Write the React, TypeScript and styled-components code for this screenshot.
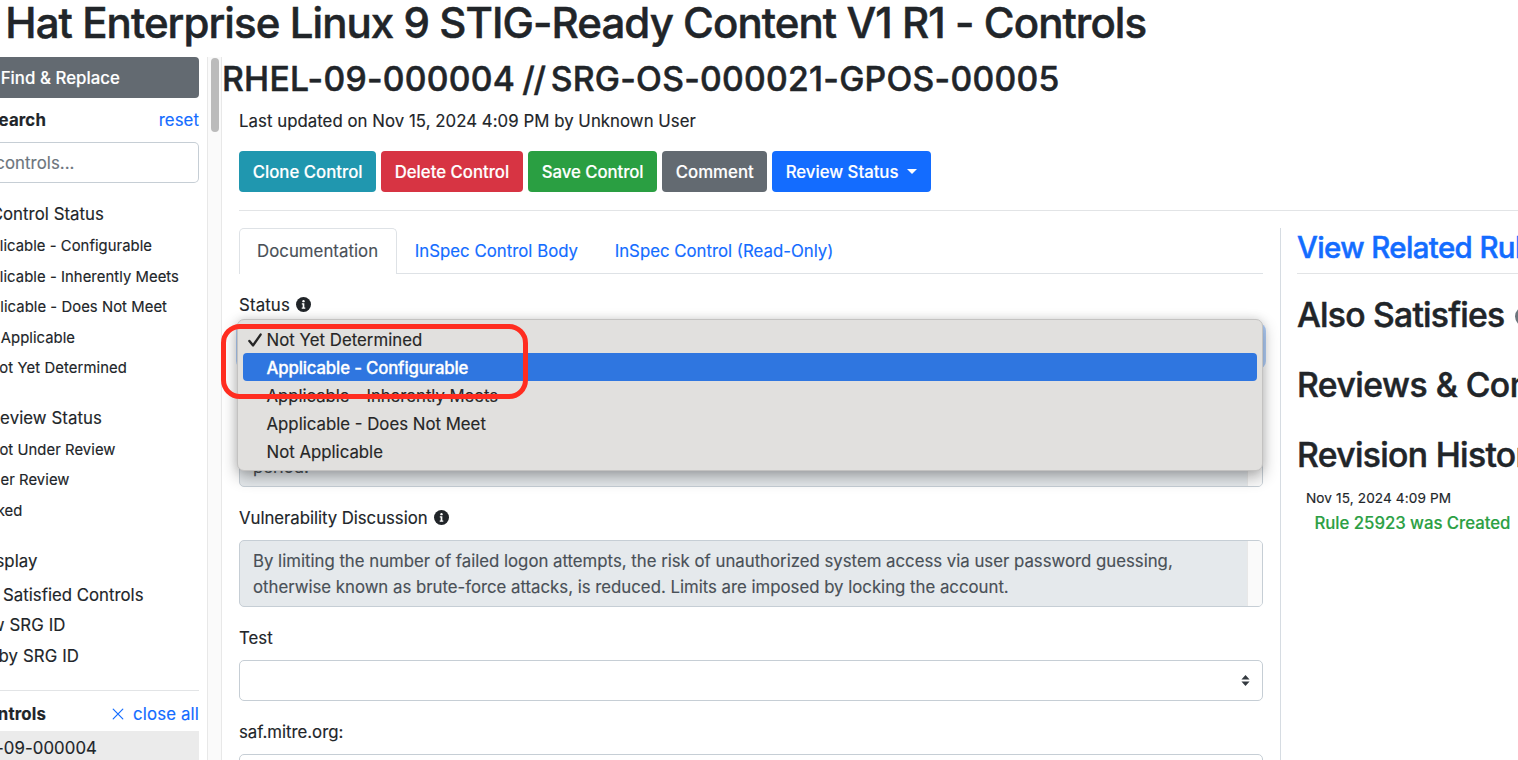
import React from "react";
import styled, { createGlobalStyle, css } from "styled-components";

const GlobalStyle = createGlobalStyle`
  *, *::before, *::after { box-sizing: border-box; }
  html, body { margin: 0; height: 100%; overflow: hidden; background: #fff; }
  body {
    font-family: Inter, "Liberation Sans", sans-serif;
    font-size: 16.8px;
    font-weight: 400;
    line-height: 26px;
    color: #212529;
    -webkit-text-stroke: 0.15px currentColor;
    -webkit-font-smoothing: antialiased;
  }
`;

const blue = "#136cff";
const line = "#e2e4e6";
const inputBorder = "#c6ced5";

const heading = css`
  font-weight: 500;
  -webkit-text-stroke: 0.5px currentColor;
  white-space: pre;
`;

const Page = styled.div`
  height: 760px;
  width: 1518px;
  overflow: hidden;
  display: flex;
  flex-direction: column;
`;

const Title = styled.h1`
  ${heading}
  margin: 0;
  height: 57px;
  padding-left: 5.3px;
  flex: none;
  font-size: 42px;
  line-height: 46px;
  letter-spacing: -0.93px;
`;

const Columns = styled.div`
  flex: 1;
  min-height: 0;
  display: flex;
`;

const Label = styled.span<{ $ls?: number }>`
  white-space: pre;
  letter-spacing: ${(p) => p.$ls ?? 0}px;
`;

/* Sidebar */

const Sidebar = styled.aside`
  width: 207px;
  flex: none;
  padding-right: 8px;
  overflow: hidden;
`;

const Clip = styled.div<{ $end: number; $h: number; $size?: number }>`
  width: ${(p) => p.$end}px;
  height: ${(p) => p.$h}px;
  display: flex;
  align-items: center;
  justify-content: flex-end;
  overflow: hidden;
  font-size: ${(p) => p.$size ?? 16.8}px;
`;

const FindButton = styled.div`
  height: 41px;
  background: #636a71;
  border-radius: 0 4px 4px 0;
  color: #fff;
  font-weight: 500;
`;

const SideRow = styled.div<{ $h: number; $pad?: number }>`
  display: flex;
  align-items: center;
  justify-content: space-between;
  height: ${(p) => p.$h}px;
  padding-top: ${(p) => p.$pad ?? 0}px;
`;

const Strong = styled.span`
  display: flex;
  font-weight: 700;
  letter-spacing: 0.15px;
  overflow: hidden;
  width: 46px;
  justify-content: flex-end;
`;

const Link = styled.span<{ $ls?: number }>`
  display: inline-flex;
  align-items: center;
  color: ${blue};
  letter-spacing: ${(p) => p.$ls ?? 0.05}px;
  svg { margin-right: 9px; }
`;

const SearchInput = styled.div`
  height: 41px;
  border: 1px solid ${inputBorder};
  border-left: 0;
  border-radius: 0 5px 5px 0;
  color: #6c757d;
`;

const FilterGroup = styled.div<{ $top: number }>`
  margin-top: ${(p) => p.$top}px;
`;

const SideRule = styled.div`
  margin-top: 19px;
  height: 1px;
  background: ${line};
`;

const SelectedControl = styled.div`
  height: 33px;
  background: #ebebeb;
`;

const ScrollTrack = styled.div`
  width: 15px;
  flex: none;
  border: solid #e8e8e8;
  border-width: 0 1px;
  background: #fafafa;
  padding: 1px 2px 0 3px;
`;

const ScrollThumb = styled.div`
  width: 8px;
  height: 74px;
  border-radius: 4px;
  background: #bbb;
`;

/* Main */

const Main = styled.main`
  flex: 1;
  min-width: 0;
  padding-left: 17px;
`;

const RuleTitle = styled.h2`
  ${heading}
  margin: 0 0 0 -17px;
  height: 51px;
  display: flex;
  font-size: 33.7px;
  line-height: 43px;
  letter-spacing: 0.26px;
`;

const Slashes = styled.span`
  letter-spacing: -1.2px;
  margin: 0 6px 0 7px;
`;

const Updated = styled.div`
  height: 43px;
  letter-spacing: 0.04px;
`;

const ButtonRow = styled.div`
  display: flex;
  gap: 5px;
  height: 41px;
`;

const Button = styled.div<{ $bg: string; $w: number; $ls: number }>`
  width: ${(p) => p.$w}px;
  background: ${(p) => p.$bg};
  letter-spacing: ${(p) => p.$ls}px;
  border-radius: 4px;
  padding-left: 13.7px;
  display: flex;
  align-items: center;
  color: #fff;
  font-weight: 500;
  white-space: pre;
`;

const Caret = styled.i`
  margin-left: 9px;
  border: 5px solid transparent;
  border-top-color: #fff;
  border-bottom: 0;
`;

const HeaderRule = styled.div`
  margin-top: 18px;
  height: 1px;
  background: ${line};
`;

const Body = styled.div`
  display: flex;
  margin-top: 17px;
  height: 540px;
`;

const Form = styled.section`
  width: 1024px;
  flex: none;
`;

const Tabs = styled.nav`
  display: flex;
  height: 46px;
  border-bottom: 1px solid #dee2e6;
`;

const Tab = styled.div<{ $w: number; $ls: number; $active?: boolean }>`
  width: ${(p) => p.$w}px;
  height: 46px;
  letter-spacing: ${(p) => p.$ls}px;
  padding-left: 17.7px;
  display: flex;
  align-items: center;
  color: ${blue};
  white-space: pre;
  ${(p) =>
    p.$active &&
    css`
      color: #495057;
      background: #fff;
      border: 1px solid #dee2e6;
      border-bottom: 0;
      border-radius: 5px 5px 0 0;
      padding: 0 0 1px 17px;
    `}
`;

const FieldLabel = styled.div<{ $top: number; $ls?: number }>`
  margin-top: ${(p) => p.$top}px;
  height: 26px;
  display: flex;
  align-items: center;
  letter-spacing: ${(p) => p.$ls ?? 0}px;
  svg { margin: 0 0 1px 6px; }
`;

const SelectBox = styled.div<{ $focus?: boolean }>`
  position: relative;
  margin-top: 9px;
  height: 41px;
  border: 1px solid ${(p) => (p.$focus ? "#80bdff" : inputBorder)};
  border-radius: 5px;
  background: #fff;
  display: flex;
  align-items: center;
  justify-content: flex-end;
  padding-right: 12.5px;
  ${(p) =>
    p.$focus &&
    css`
      height: 40px;
      margin-top: 8px;
      box-shadow: 0 0 0 3px #b3d1fb;
    `}
`;

const TextArea = styled.div`
  margin-top: 9px;
  height: 67px;
  border: 1px solid ${inputBorder};
  border-radius: 5px;
  background: #e5e9ec;
  color: #495057;
  display: flex;
  overflow: hidden;
`;

const AreaText = styled.div`
  flex: 1;
  padding: 7px 0 0 13px;
  white-space: pre;
  letter-spacing: -0.01px;
`;

const AreaTrack = styled.div`
  width: 15px;
  background: #fafafa;
  border-left: 1px solid #e8e8e8;
`;

const Menu = styled.div`
  position: absolute;
  z-index: 2;
  left: -3px;
  top: -8px;
  width: 1026px;
  height: 152px;
  padding: 5px 5px;
  background: #e1e0de;
  border: 1px solid #c3c2c1;
  border-radius: 7px;
  box-shadow: 0 6px 16px rgba(0, 0, 0, 0.3), 0 0 10px rgba(0, 0, 0, 0.1);
`;

const MenuItem = styled.div<{ $ls: number; $selected?: boolean }>`
  height: 28px;
  padding-top: 2px;
  display: flex;
  align-items: center;
  border-radius: 4px;
  color: #262626;
  letter-spacing: ${(p) => p.$ls}px;
  white-space: pre;
  ${(p) =>
    p.$selected &&
    css`
      background: #2f76e0;
      color: #fff;
      font-weight: 500;
      -webkit-text-stroke-width: 0.3px;
    `}
`;

const CheckSlot = styled.span`
  width: 23.5px;
  display: flex;
  padding-left: 5px;
`;

const Highlight = styled.div`
  position: absolute;
  z-index: 3;
  left: -19px;
  top: -3px;
  width: 307px;
  height: 75px;
  border: 5px solid #ff2d20;
  border-radius: 19px;
`;

/* Right panel */

const Related = styled.section`
  flex: none;
  width: 400px;
  margin-left: 17px;
  padding-left: 16px;
  border-left: 1px solid #d6dce2;
`;

const RelatedLink = styled.div`
  ${heading}
  height: 46px;
  border-bottom: 1px solid ${line};
  color: ${blue};
  font-size: 29.4px;
  line-height: 40px;
  letter-spacing: -0.6px;
`;

const SectionTitle = styled.h2<{ $ls: number }>`
  ${heading}
  margin: 28px 0 0;
  height: 42px;
  display: flex;
  align-items: center;
  font-size: 33.7px;
  letter-spacing: ${(p) => p.$ls}px;
  &:first-of-type { margin-top: 20px; }
`;

const CountBadge = styled.span`
  margin: 2px 0 0 10px;
  width: 27px;
  height: 21px;
  border-radius: 11px;
  background: #6c757d;
  color: #fff;
  font-size: 13px;
  line-height: 21px;
  text-align: center;
`;

const RevisionDate = styled.div`
  margin-top: 9px;
  padding-left: 9px;
  height: 25px;
  font-size: 13.6px;
  letter-spacing: 0.12px;
`;

const RevisionEntry = styled.div`
  padding-left: 17.5px;
  color: #2b9f43;
  font-weight: 500;
  letter-spacing: -0.05px;
`;

const InfoIcon = () => (
  <svg width="15" height="15" viewBox="0 0 16 16">
    <circle cx="8" cy="8" r="8" fill="#212529" />
    <circle cx="8" cy="4.4" r="1.25" fill="#fff" />
    <path d="M6.2 6.7h2.7v4.4h1v1.3H6.1v-1.3h1V8h-.9z" fill="#fff" />
  </svg>
);

const CloseIcon = () => (
  <svg width="12" height="12" viewBox="0 0 12 12">
    <path d="M1.2 1.2l9.6 9.6M10.8 1.2l-9.6 9.6" stroke={blue} strokeWidth="1.2" strokeLinecap="round" />
  </svg>
);

const CheckIcon = () => (
  <svg width="14" height="14" viewBox="0 0 14 14">
    <path d="M1.4 8l3.7 4.4L12.6 1.6" fill="none" stroke="#262626" strokeWidth="2.4" strokeLinecap="round" strokeLinejoin="round" />
  </svg>
);

const SortIcon = () => (
  <svg width="9" height="11" viewBox="0 0 8 10">
    <path d="M4 0L0.3 4h7.4zM4 10L0.3 6h7.4z" fill="#343a40" />
  </svg>
);

const statusFilters = [
  { text: "licable - Configurable", end: 152, ls: 0.06 },
  { text: "licable - Inherently Meets", end: 179, ls: 0.07 },
  { text: "licable - Does Not Meet", end: 167, ls: 0.07 },
  { text: "Applicable", end: 75, ls: 0.05 },
  { text: "ot Yet Determined", end: 127, ls: 0.12 },
];

const reviewFilters = [
  { text: "ot Under Review", end: 115.5, ls: 0.07 },
  { text: "er Review", end: 69.5, ls: 0.07 },
  { text: "ked", end: 22.5, ls: 0.1 },
];

const displayFilters = [
  { text: "Satisfied Controls", end: 143.5, ls: 0 },
  { text: "w SRG ID", end: 65.5, ls: 0.1 },
  { text: "by SRG ID", end: 79, ls: 0.1 },
];

const menuItems = [
  { text: "Not Yet Determined", ls: 0.03 },
  { text: "Applicable - Configurable", ls: -0.16, selected: true },
  { text: "Applicable - Inherently Meets", ls: -0.06 },
  { text: "Applicable - Does Not Meet", ls: 0 },
  { text: "Not Applicable", ls: 0 },
];

export default function App() {
  return (
    <>
      <GlobalStyle />
      <Page>
        <Title>Hat Enterprise Linux 9 STIG-Ready Content V1 R1 - Controls</Title>
        <Columns>
          <Sidebar>
            <FindButton>
              <Clip $end={120} $h={41}><Label $ls={0.05}>Find &amp; Replace</Label></Clip>
            </FindButton>
            <SideRow $h={44}>
              <Strong>earch</Strong>
              <Link>reset</Link>
            </SideRow>
            <SearchInput>
              <Clip $end={74.5} $h={39}><Label $ls={0.05}>controls...</Label></Clip>
            </SearchInput>
            <FilterGroup $top={14}>
              <Clip $end={104} $h={34}><Label $ls={0.05}>Control Status</Label></Clip>
              {statusFilters.map((f) => (
                <Clip key={f.text} $end={f.end} $h={30.5} $size={14.8}><Label $ls={f.ls}>{f.text}</Label></Clip>
              ))}
            </FilterGroup>
            <FilterGroup $top={18}>
              <Clip $end={102} $h={33}><Label $ls={0.08}>Review Status</Label></Clip>
              {reviewFilters.map((f) => (
                <Clip key={f.text} $end={f.end} $h={30.5} $size={14.8}><Label $ls={f.ls}>{f.text}</Label></Clip>
              ))}
            </FilterGroup>
            <FilterGroup $top={18}>
              <Clip $end={37.5} $h={33}><Label $ls={0.05}>splay</Label></Clip>
              <FilterGroup $top={2.5}>
                {displayFilters.map((f) => (
                  <Clip key={f.text} $end={f.end} $h={30.5}><Label $ls={f.ls}>{f.text}</Label></Clip>
                ))}
              </FilterGroup>
            </FilterGroup>
            <SideRule />
            <SideRow $h={40} $pad={6}>
              <Strong>ntrols</Strong>
              <Link $ls={0.15}><CloseIcon />close all</Link>
            </SideRow>
            <SelectedControl>
              <Clip $end={97} $h={33}><Label $ls={0.08}>-09-000004</Label></Clip>
            </SelectedControl>
          </Sidebar>
          <ScrollTrack><ScrollThumb /></ScrollTrack>
          <Main>
            <RuleTitle>
              RHEL-09-000004<Slashes>//</Slashes>SRG-OS-000021-GPOS-00005
            </RuleTitle>
            <Updated>Last updated on Nov 15, 2024 4:09 PM by Unknown User</Updated>
            <ButtonRow>
              <Button $bg="#2097af" $w={137} $ls={0}>Clone Control</Button>
              <Button $bg="#d73443" $w={142} $ls={-0.02}>Delete Control</Button>
              <Button $bg="#2a9f42" $w={129} $ls={-0.06}>Save Control</Button>
              <Button $bg="#636a71" $w={105} $ls={0.02}>Comment</Button>
              <Button $bg="#136cff" $w={159} $ls={-0.02}>Review Status<Caret /></Button>
            </ButtonRow>
            <HeaderRule />
            <Body>
              <Form>
                <Tabs>
                  <Tab $w={158} $ls={0.04} $active>Documentation</Tab>
                  <Tab $w={200} $ls={0.02}>InSpec Control Body</Tab>
                  <Tab $w={260} $ls={0}>InSpec Control (Read-Only)</Tab>
                </Tabs>
                <FieldLabel $top={18} $ls={0.15}>Status<InfoIcon /></FieldLabel>
                <SelectBox $focus>
                  <SortIcon />
                  <Menu>
                    {menuItems.map((m, i) => (
                      <MenuItem key={m.text} $ls={m.ls} $selected={m.selected}>
                        <CheckSlot>{i === 0 && <CheckIcon />}</CheckSlot>
                        {m.text}
                      </MenuItem>
                    ))}
                  </Menu>
                  <Highlight />
                </SelectBox>
                <FieldLabel $top={19} />
                <TextArea>
                  <AreaText>{"\nperiod."}</AreaText>
                  <AreaTrack />
                </TextArea>
                <FieldLabel $top={18} $ls={-0.05}>Vulnerability Discussion<InfoIcon /></FieldLabel>
                <TextArea>
                  <AreaText>
                    {"By limiting the number of failed logon attempts, the risk of unauthorized system access via user password guessing,\notherwise known as brute-force attacks, is reduced. Limits are imposed by locking the account."}
                  </AreaText>
                  <AreaTrack />
                </TextArea>
                <FieldLabel $top={18}>Test</FieldLabel>
                <SelectBox><SortIcon /></SelectBox>
                <FieldLabel $top={18} $ls={-0.02}>saf.mitre.org:</FieldLabel>
                <SelectBox />
              </Form>
              <Related>
                <RelatedLink>View Related Rules</RelatedLink>
                <SectionTitle $ls={-0.76}>Also Satisfies<CountBadge>0</CountBadge></SectionTitle>
                <SectionTitle $ls={-0.5}>Reviews &amp; Comments</SectionTitle>
                <SectionTitle $ls={-0.66}>Revision History</SectionTitle>
                <RevisionDate>Nov 15, 2024 4:09 PM</RevisionDate>
                <RevisionEntry>Rule 25923 was Created</RevisionEntry>
              </Related>
            </Body>
          </Main>
        </Columns>
      </Page>
    </>
  );
}
